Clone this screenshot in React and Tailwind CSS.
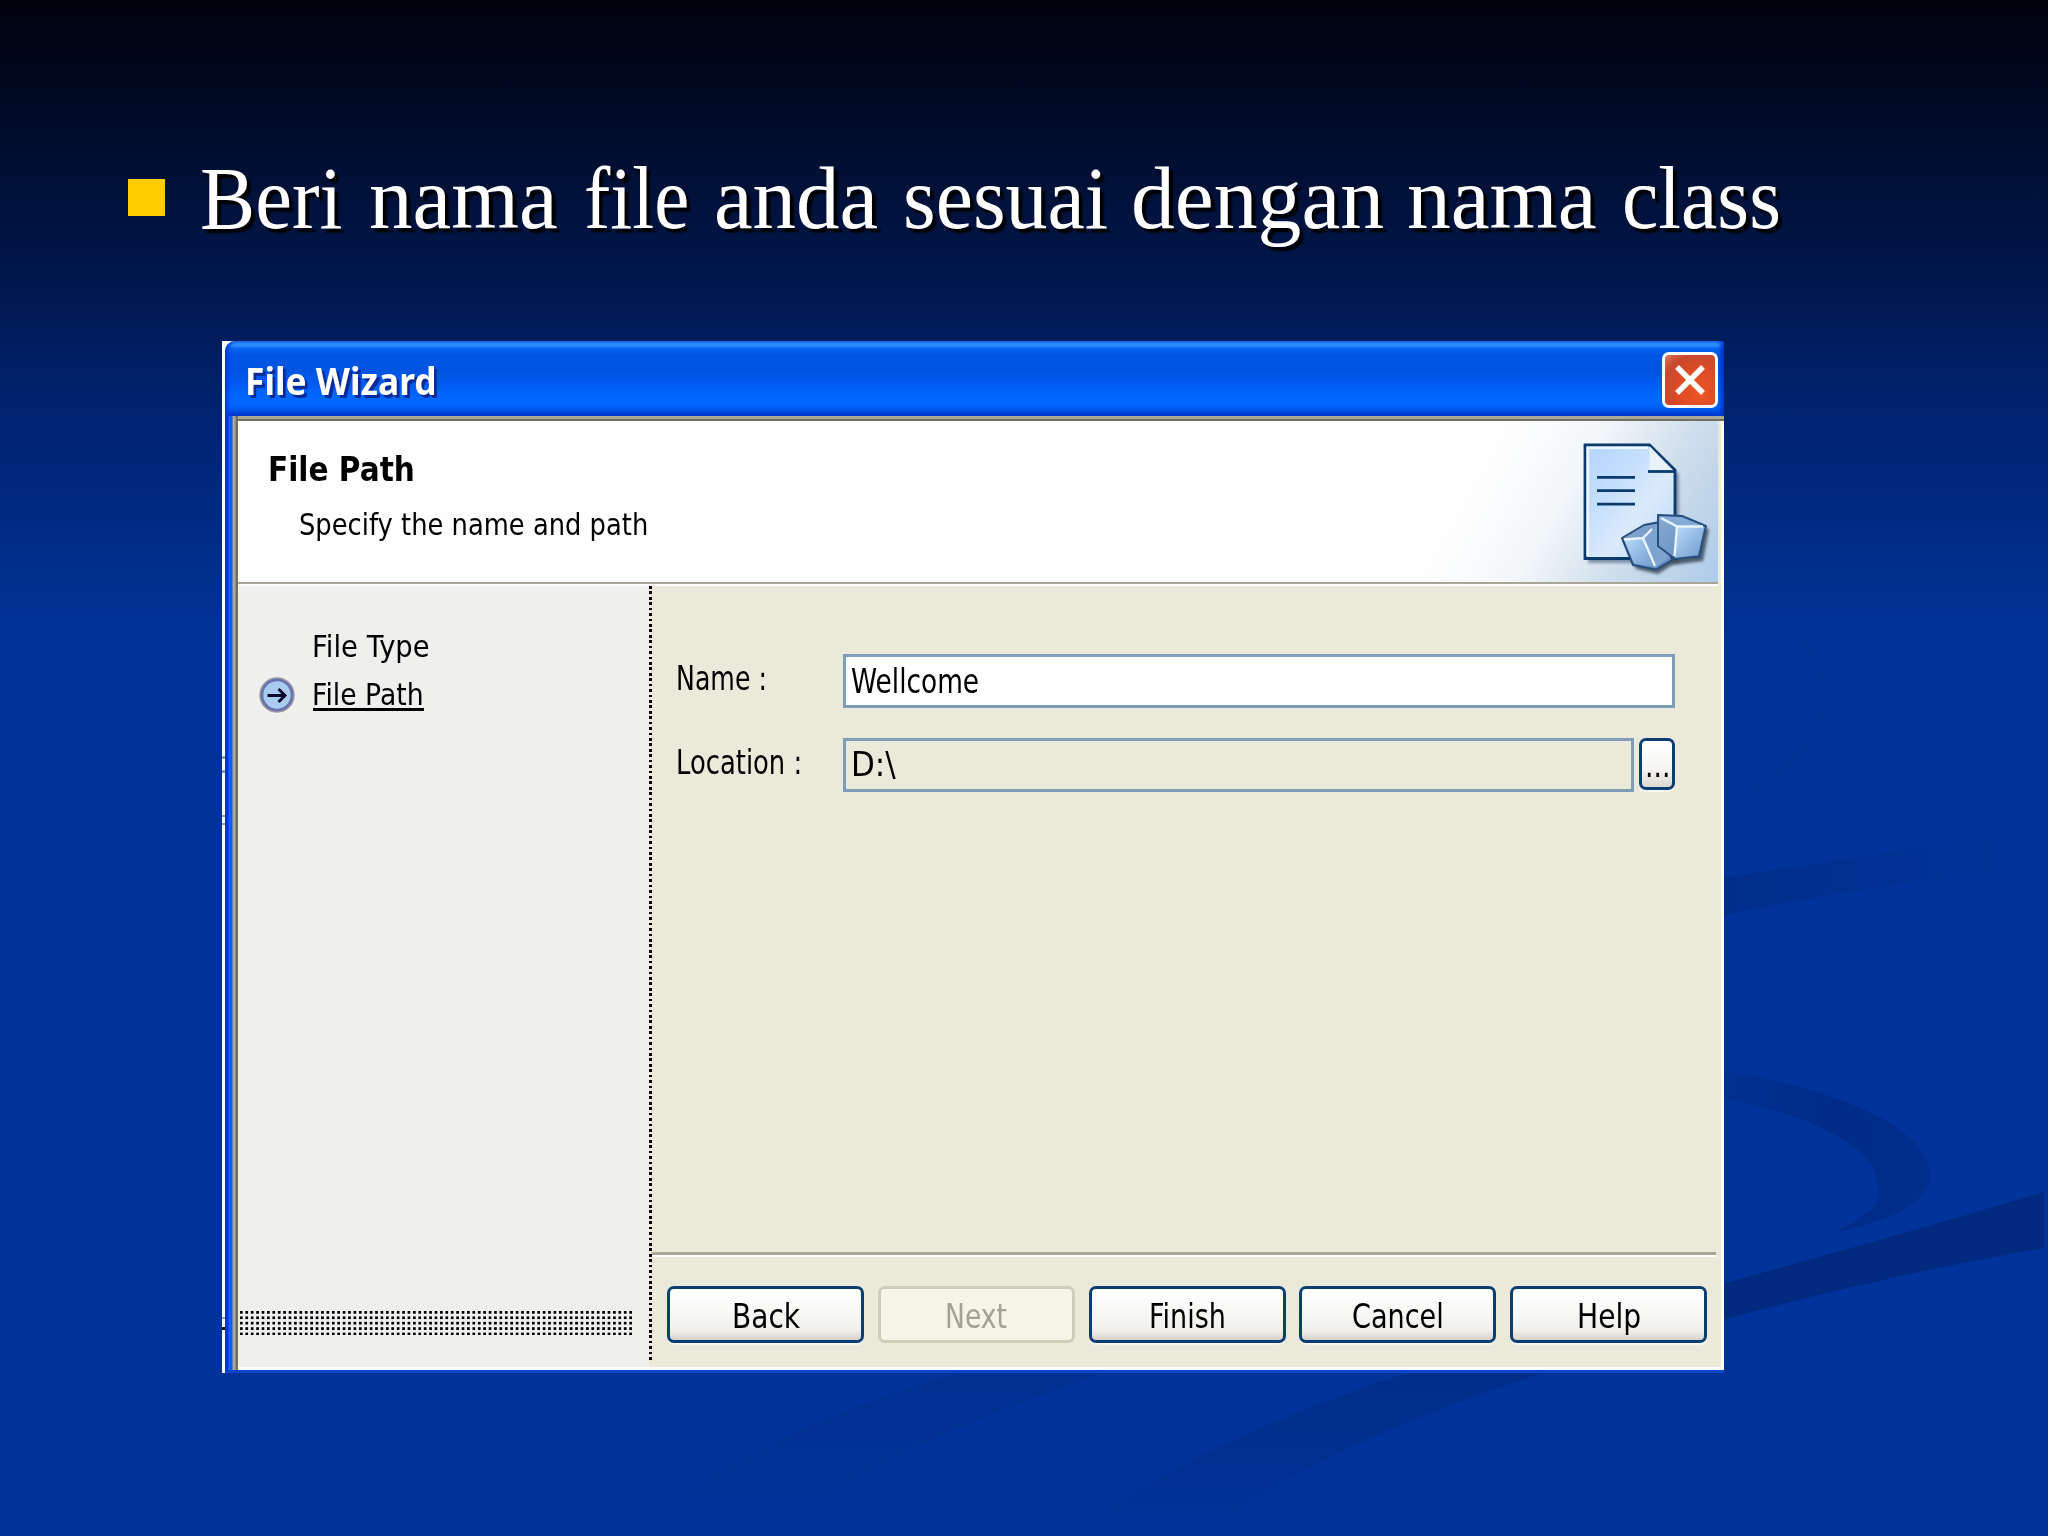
import { useLayoutEffect, useRef, useState } from "react";
import clsx from "clsx";

/* Single line of text stretched or squeezed to the width of its box. */
function Fit({ className, children }) {
  const ref = useRef(null);
  const [scale, setScale] = useState(1);
  useLayoutEffect(() => {
    const el = ref.current;
    setScale(el.parentElement.clientWidth / el.offsetWidth);
  }, [children]);
  return (
    <div className={clsx("shrink-0 leading-none whitespace-nowrap", className)}>
      <span ref={ref} className="inline-block origin-left" style={{ transform: `scaleX(${scale})` }}>
        {children}
      </span>
    </div>
  );
}

const heading = [
  ["Beri", "w-[143px] mr-[26px]"],
  ["nama", "w-[189px] mr-[26px]"],
  ["file", "w-[105px] mr-[25px]"],
  ["anda", "w-[164px] mr-[25px]"],
  ["sesuai", "w-[205px] mr-[23px]"],
  ["dengan", "w-[253px] mr-[23px]"],
  ["nama", "w-[190px] mr-[25px]"],
  ["class", "w-[159px]"],
];

const buttons = [
  ["Back", "w-[68px]", false],
  ["Next", "w-[62px]", true],
  ["Finish", "w-[77px]", false],
  ["Cancel", "w-[92px]", false],
  ["Help", "w-[64px]", false],
];

function Swooshes() {
  return (
    <svg className="absolute inset-0 h-full w-full" viewBox="0 0 2048 1536">
      <defs>
        <linearGradient id="bandA" x1="0" x2="1">
          <stop offset="0" stopColor="#002d8a" />
          <stop offset="1" stopColor="#003399" />
        </linearGradient>
        <linearGradient id="crescent" x1="0" x2="1">
          <stop offset="0" stopColor="#003193" />
          <stop offset=".6" stopColor="#002b87" />
          <stop offset="1" stopColor="#002e8c" />
        </linearGradient>
        <linearGradient id="tail" x1="0" x2="0" y1="0" y2="1">
          <stop offset="0" stopColor="#002d88" />
          <stop offset="1" stopColor="#003298" />
        </linearGradient>
        <linearGradient id="tail2" x1="0" x2="0" y1="0" y2="1">
          <stop offset="0" stopColor="#003090" />
          <stop offset="1" stopColor="#003298" />
        </linearGradient>
      </defs>
      <path d="M1700 881Q1880 855 2048 826V866Q1880 882 1700 920Z" fill="url(#bandA)" />
      <path
        d="M1700 1069C1800 1078 1930 1120 1930 1174C1930 1206 1880 1224 1836 1232C1870 1214 1880 1206 1879 1186C1876 1140 1790 1108 1700 1094Z"
        fill="url(#crescent)"
      />
      <path d="M1700 1290Q1890 1238 2044 1192V1248Q1880 1276 1700 1326Z" fill="#00297f" />
      <path d="M1410 1372H1547Q1330 1440 1200 1536H1065Q1200 1440 1410 1372Z" fill="url(#tail)" />
      <path d="M960 1372H1108Q900 1440 766 1536H620Q760 1430 960 1372Z" fill="url(#tail2)" />
      <path d="M1795 632Q1826 660 1822 710Q1810 760 1735 800" fill="none" stroke="#003195" strokeWidth="6" />
    </svg>
  );
}

function CloseButton() {
  return (
    <div className="flex h-[56px] w-[56px] items-center justify-center rounded-[7px] border-[3px] border-white bg-[radial-gradient(circle_at_70%_75%,#ec5425_0%,#dd4a26_45%,#c8482c_75%,#dd7a60_100%)]">
      <svg className="h-[32px] w-[32px]" viewBox="0 0 32 32">
        <path d="M3 3L29 29M29 3L3 29" stroke="#fff" strokeWidth="5.400" />
      </svg>
    </div>
  );
}

function DocumentIcon() {
  return (
    <svg className="h-[140px] w-[136px]" viewBox="1578 438 136 140">
      <defs>
        <linearGradient id="paper" x1="0" y1="0" x2="1" y2="1">
          <stop offset="0" stopColor="#b4d5fd" />
          <stop offset=".35" stopColor="#c5dffe" />
          <stop offset=".6" stopColor="#dbeafb" />
          <stop offset="1" stopColor="#b7d7fa" />
        </linearGradient>
        <linearGradient id="cubeSide" x1="0" y1="0" x2="1" y2="1">
          <stop offset="0" stopColor="#88aad2" />
          <stop offset="1" stopColor="#6189bb" />
        </linearGradient>
        <linearGradient id="cubeFront" x1="0" y1="0" x2="1" y2="1">
          <stop offset="0" stopColor="#b9dafa" />
          <stop offset="1" stopColor="#6f9bcd" />
        </linearGradient>
        <filter id="soft" x="-20%" y="-20%" width="140%" height="140%">
          <feGaussianBlur stdDeviation="1.6" />
        </filter>
      </defs>
      <path d="M1588 449H1652L1679 474V563H1588Z" fill="#5a6f88" opacity=".7" filter="url(#soft)" />
      <path d="M1585 445H1649.500L1675 470V558.500H1585Z" fill="url(#paper)" stroke="#0b3a6c" strokeWidth="2.800" />
      <path d="M1587.800 556V447.800H1648" fill="none" stroke="#f1f7ff" strokeWidth="2.600" />
      <path d="M1649.500 446V471.500H1674Z" fill="#e9f1fb" />
      <path d="M1648 471.500H1675" stroke="#0b3a6c" strokeWidth="2.800" />
      <path d="M1597 477.300H1635M1597 490.700H1635M1597 504.200H1635" stroke="#0b3a6c" strokeWidth="2.800" />
      <path d="M1624 541L1654 526L1663 518L1709 529L1703 561L1672 565L1658 574L1636 569Z" fill="#33404f" opacity=".8" filter="url(#soft)" />
      <path d="M1622 538L1644 525L1660 522L1672 560L1656 569.500L1633 565Z" fill="url(#cubeSide)" stroke="#264f7e" strokeWidth="2" strokeLinejoin="round" />
      <path d="M1624 539L1643 538L1654 567L1634 563Z" fill="url(#cubeFront)" />
      <path d="M1643 538L1657 524L1669 558L1655 567Z" fill="#7da3cf" />
      <path d="M1624 539.500L1643 538L1655 566M1643 538L1652 529" fill="none" stroke="#e8f4ff" strokeWidth="2.400" />
      <path d="M1658 515L1682 516L1706 526L1699 556.500L1675 559L1658 546Z" fill="url(#cubeSide)" stroke="#264f7e" strokeWidth="2" strokeLinejoin="round" />
      <path d="M1660 517L1682 517.500L1703 526L1677 526Z" fill="#86abd6" />
      <path d="M1677 527L1704 527L1698 555L1675 557.500Z" fill="url(#cubeFront)" />
      <path d="M1661 518L1677 526.500L1674.500 556M1677 526.500H1703" fill="none" stroke="#e8f4ff" strokeWidth="2.400" />
    </svg>
  );
}

function StepArrow() {
  return (
    <svg className="h-[36px] w-[36px]" viewBox="0 0 36 36">
      <circle cx="18" cy="18" r="16.200" fill="#a9cbf0" stroke="#9a96a2" strokeWidth="3" />
      <circle cx="18" cy="18" r="15" fill="none" stroke="#6673ad" strokeWidth="2.600" />
      <path d="M8.500 18.500H26M19.500 12L26 18.500L19.500 25" fill="none" stroke="#06062a" strokeWidth="2.900" />
    </svg>
  );
}

function WizardButton({ label, width, disabled }) {
  return (
    <div
      className={clsx(
        "flex h-[57px] w-[197px] items-start justify-center rounded-[7px] border-[3px] pt-[11px] text-[33px]",
        disabled
          ? "border-[#cfccba] bg-[#f5f4e6] text-[#a3a193]"
          : "border-[#0b3f73] bg-[linear-gradient(#ffffff_0%,#f8f8f6_45%,#f0efeb_82%,#d9d2c8_100%)] text-black shadow-[0_2px_1px_#f8f7f0]"
      )}
    >
      <Fit className={width}>{label}</Fit>
    </div>
  );
}

function Sidebar() {
  return (
    <aside className="flex w-[411px] flex-col bg-[#efefee]">
      <div className="mt-[46px] flex h-[28px] pl-[74px]">
        <Fit className="w-[118px] text-[30px]">File Type</Fit>
      </div>
      <div className="mt-[17px] flex h-[36px] pl-[21px]">
        <StepArrow />
        <div className="ml-[18px] mt-[3px] h-[31px] w-[111px] border-b-[3px] border-black">
          <Fit className="-ml-[1px] w-[112px] text-[30px]">File Path</Fit>
        </div>
      </div>
      <div className="mt-auto mb-[32px] ml-[2px] h-[24.500px] w-[393px] bg-[conic-gradient(transparent_75%,#000_0)] bg-[length:5.420px_5.420px]" />
    </aside>
  );
}

function Form() {
  return (
    <section className="flex grow flex-col pl-[24px] pt-[68px]">
      <div className="flex h-[54px]">
        <Fit className="mr-[76px] mt-[8px] w-[91px] text-[33px]">Name :</Fit>
        <div className="flex w-[832px] border-[3px] border-[#7f9db9] bg-white pl-[5px] pt-[8px]">
          <Fit className="w-[128px] text-[33px]">Wellcome</Fit>
        </div>
      </div>
      <div className="mt-[30px] flex h-[54px]">
        <Fit className="mr-[41px] mt-[8px] w-[126px] text-[33px]">Location :</Fit>
        <div className="flex w-[791px] border-[3px] border-[#7f9db9] pl-[5px] pt-[7px]">
          <Fit className="w-[45px] text-[33px]">D:\</Fit>
        </div>
        <div className="ml-[5px] flex h-[52px] w-[36px] justify-center rounded-[7px] border-[3px] border-[#0b3f73] bg-[linear-gradient(#ffffff_0%,#f6f5f2_60%,#ddd8d0_100%)] pt-[8px] shadow-[0_2px_1px_#f8f7f0]">
          <Fit className="w-[25px] text-[33px]">...</Fit>
        </div>
      </div>
    </section>
  );
}

export default function App() {
  return (
    <main className="relative flex h-[1536px] w-[2048px] flex-col overflow-hidden bg-[linear-gradient(#00020c_0px,#000d2e_145px,#00174b_270px,#002474_430px,#003090_600px,#003399_650px)] font-['DejaVu_Sans','Noto_Sans',sans-serif] text-black">
      <Swooshes />

      <h1 className="relative flex h-[88px] mt-[155px] pl-[128px] font-['Liberation_Serif',serif] text-[88px] text-white [text-shadow:4px_4px_2px_#000]">
        <span className="mr-[35px] mt-[24px] h-[37px] w-[37px] bg-[#ffcc00]" />
        {heading.map(([word, box], i) => (
          <Fit key={i} className={box}>
            {word}
          </Fit>
        ))}
      </h1>

      <div className="relative ml-[222px] mt-[98px] flex h-[1032px] w-[1502px] bg-[linear-gradient(90deg,#fff_14px,transparent_14px)]">
        <div className="flex w-[3px] flex-col bg-white pt-[415px]">
          <i className="h-[3px] bg-[#8e9cc4]" />
          <i className="mt-[11px] h-[3px] bg-[#8e9cc4]" />
          <i className="mt-[42px] h-[2px] bg-[#8e9cc4]" />
          <i className="mt-[6px] h-[2px] bg-[#8e9cc4]" />
          <i className="mt-[492px] h-[2px] bg-[#8e9cc4]" />
          <i className="mt-[8px] h-[3px] bg-[#101030]" />
        </div>

        <div className="flex w-[1499px] flex-col">
          <header className="flex h-[75px] shrink-0 justify-between rounded-tl-[10px] rounded-tr-[3px] bg-[linear-gradient(#2a82f4_0px,#2f93ff_2px,#2b8cff_5px,#0a66f2_7px,#0056e4_14px,#0054e2_30px,#005cf2_44px,#0068ff_56px,#0066fc_65px,#0050e6_70px,#0038c8_75px)] pl-[20px] pr-[6px] pt-[11px] shadow-[inset_4px_0_4px_-1px_#0038d0,inset_-4px_0_4px_-1px_#0030c8]">
            <Fit className="mt-[10px] w-[192px] font-['Noto_Sans',sans-serif] text-[37px] font-bold text-white [text-shadow:3px_3px_0_#0a2a9a]">
              File Wizard
            </Fit>
            <CloseButton />
          </header>

          <div className="flex grow border-b-[3px] border-[#0a46cc] bg-[linear-gradient(90deg,#0831d9_0px,#0831d9_3px,#166aee_4px,#0c5be8_7px,#aca899_8px,#aca899_10px,#716f64_11px)] pl-[13px]">
            <div className="flex grow flex-col border-t-[3px] border-[#aca899] bg-[#ebe9d9] shadow-[inset_0_2px_0_#716f64,inset_-3px_0_0_#ffffff,inset_0_-3px_0_#ffffff]">
              <div className="mr-[6px] mt-[2px] flex h-[161px] justify-between bg-[linear-gradient(120deg,#fefefe_0%,#fefefe_81%,#f3f7fa_87%,#cfdeec_93%,#bdd3e9_97%,#accbec_100%)]">
                <div className="flex flex-col">
                  <Fit className="ml-[30px] mt-[32px] w-[147px] text-[33px] font-bold">File Path</Fit>
                  <Fit className="ml-[61px] mt-[24px] w-[349px] text-[30px]">Specify the name and path</Fit>
                </div>
                <div className="mr-[4px] mt-[17px]">
                  <DocumentIcon />
                </div>
              </div>
              <div className="mr-[6px] h-[4px] shrink-0 border-b-2 border-t-2 border-b-white border-t-[#a9a698]" />

              <div className="mb-[3px] flex grow">
                <Sidebar />
                <div className="mb-[5px] w-[3px] bg-[repeating-linear-gradient(#000_0px,#000_2.700px,transparent_2.700px,transparent_5.430px)]" />
                <div className="flex w-[1064px] flex-col">
                  <Form />
                  <div className="h-[5px] shrink-0 border-b-2 border-t-[3px] border-b-white border-t-[#aca899]" />
                  <footer className="flex h-[110px] shrink-0 gap-[13.800px] pl-[15px] pt-[29px]">
                    {buttons.map(([label, width, disabled]) => (
                      <WizardButton key={label} label={label} width={width} disabled={disabled} />
                    ))}
                  </footer>
                </div>
              </div>
            </div>
          </div>
        </div>
      </div>
    </main>
  );
}
